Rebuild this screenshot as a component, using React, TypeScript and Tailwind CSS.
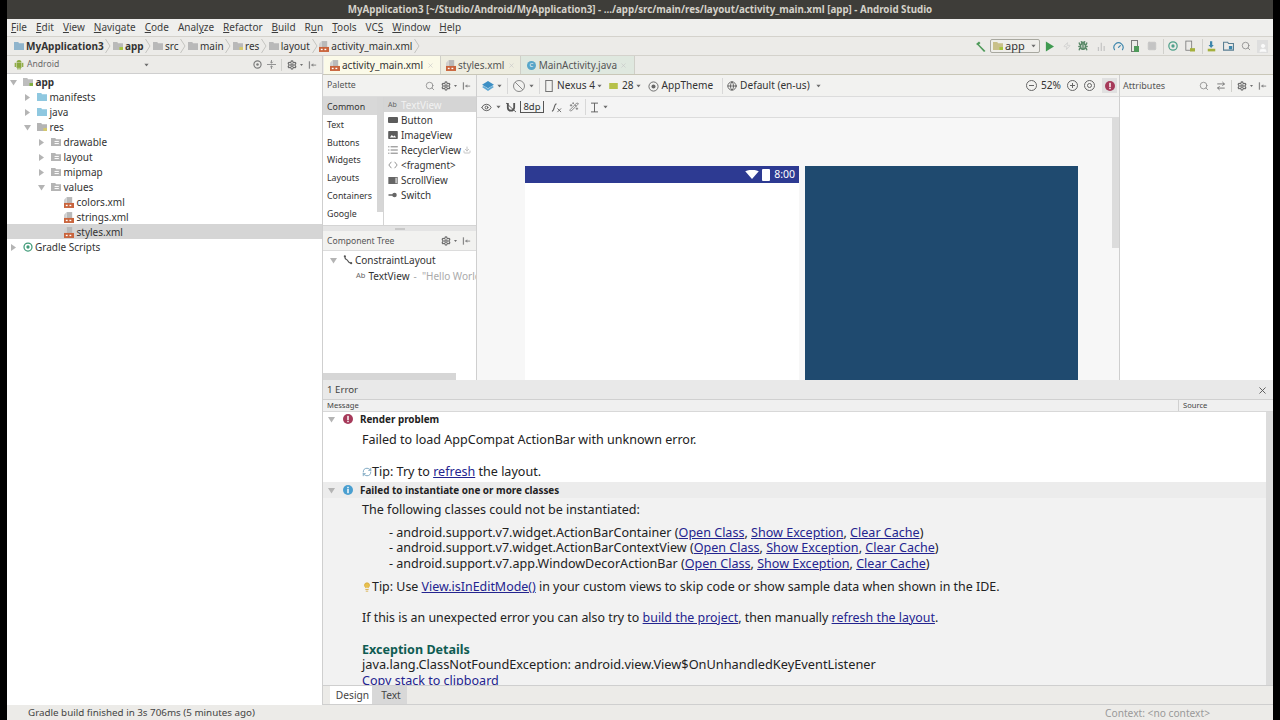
import { ReactNode } from "react";
import { Search, Settings, Zap, Bug, Gauge, Square, User, Eye, Wand2, Globe, X, ArrowRightLeft, Download, RefreshCw, Lightbulb } from "lucide-react";

const Caret = ({ className = "" }: { className?: string }) => (
  <svg width="7" height="4" viewBox="0 0 7 4" className={className}>
    <path d="M0.5 0h6L3.5 4z" fill="#6e6e6e" />
  </svg>
);

const Arrow = ({ open }: { open?: boolean }) => (
  <svg width="7" height="7" viewBox="0 0 7 7" className="shrink-0">
    {open ? <path d="M0 1h7L3.5 6.5z" fill="#b4b4b4" /> : <path d="M1 0v7l5-3.5z" fill="#b4b4b4" />}
  </svg>
);

const Chevron = () => (
  <svg width="6" height="16" viewBox="0 0 6 16" className="mx-[1.7px] shrink-0">
    <path d="M0.5 1l4.5 7-4.5 7" fill="none" stroke="#c4c4c0" />
  </svg>
);

const Folder = ({ color = "#b9b9b9", dot }: { color?: string; dot?: string }) => (
  <svg width="10" height="8" viewBox="0 0 14 11" className="shrink-0">
    <path d="M0 0h6l1 1.5h7V11H0z" fill={color} />
    {dot && <rect x="9" y="7" width="5" height="4" fill={dot} />}
  </svg>
);

const ResFolder = () => (
  <svg width="10" height="8" viewBox="0 0 14 11" className="shrink-0">
    <path d="M0 0h6l1 1.5h7V11H0z" fill="#b4b4b4" />
    <rect x="5" y="4" width="6" height="1.4" fill="#fff" />
    <rect x="5" y="7" width="6" height="1.4" fill="#fff" />
  </svg>
);

const XmlFile = () => (
  <svg width="10" height="11" viewBox="0 0 11 12" className="shrink-0">
    <path d="M3 0h6v7H3z" fill="#b9b9b9" />
    <path d="M3 0L0 3v4h3z" fill="#d0d0d0" />
    <rect x="0" y="6.5" width="11" height="5.5" fill="#c9643c" />
    <rect x="2" y="8.5" width="2" height="1.5" fill="#fff" />
    <rect x="6" y="8.5" width="2" height="1.5" fill="#fff" />
  </svg>
);

const AndroidIcon = () => (
  <svg width="10" height="11" viewBox="0 0 12 13">
    <path d="M3 4a3 3 0 0 1 6 0z" fill="#8aa83c" />
    <rect x="3" y="4.5" width="6" height="6" fill="#8aa83c" />
    <rect x="0.8" y="4.5" width="1.5" height="5" fill="#8aa83c" />
    <rect x="9.7" y="4.5" width="1.5" height="5" fill="#8aa83c" />
    <rect x="4" y="10" width="1.5" height="2.5" fill="#8aa83c" />
    <rect x="6.5" y="10" width="1.5" height="2.5" fill="#8aa83c" />
  </svg>
);

const HideIcon = () => (
  <svg width="9" height="10" viewBox="0 0 11 11">
    <rect x="1" y="1" width="1.5" height="9" fill="#8a8a8a" />
    <rect x="4" y="5" width="6" height="1.2" fill="#8a8a8a" />
    <path d="M4 5.5l2.5-2v4z" fill="#8a8a8a" />
  </svg>
);

const PanelTools = () => (
  <div className="flex items-center gap-[1px]">
    <Settings size={10} color="#6f6f6f" strokeWidth={3} />
    <Caret className="scale-50" />
    <div className="ml-[2px]">
      <HideIcon />
    </div>
  </div>
);

const ErrorBadge = ({ size = 10 }: { size?: number }) => (
  <svg width={size} height={size} viewBox="0 0 11 11" className="shrink-0">
    <circle cx="5.5" cy="5.5" r="5.5" fill="#a63a5a" />
    <rect x="4.7" y="2" width="1.6" height="4.6" fill="#fff" />
    <rect x="4.7" y="7.4" width="1.6" height="1.6" fill="#fff" />
  </svg>
);

const InfoBadge = () => (
  <svg width="10" height="10" viewBox="0 0 11 11" className="shrink-0">
    <circle cx="5.5" cy="5.5" r="5.5" fill="#4a9fd0" />
    <rect x="4.7" y="2" width="1.6" height="1.6" fill="#fff" />
    <rect x="4.7" y="4.4" width="1.6" height="4.6" fill="#fff" />
  </svg>
);

const GradleIcon = () => (
  <svg width="10" height="10" viewBox="0 0 12 12" className="shrink-0">
    <circle cx="6" cy="6" r="4.8" fill="none" stroke="#3f9a78" strokeWidth="1.5" />
    <circle cx="6" cy="6" r="2" fill="#3f9a78" />
  </svg>
);

const menus: [string, string, string][] = [
  ["", "F", "ile"],
  ["", "E", "dit"],
  ["", "V", "iew"],
  ["", "N", "avigate"],
  ["", "C", "ode"],
  ["Anal", "y", "ze"],
  ["", "R", "efactor"],
  ["", "B", "uild"],
  ["R", "u", "n"],
  ["", "T", "ools"],
  ["VC", "S", ""],
  ["", "W", "indow"],
  ["", "H", "elp"],
];

const MenuBar = () => (
  <div className="flex h-[17px] items-center gap-[9px] bg-[#efefed] pl-[4px] text-[10px] text-[#3c3c3c]">
    {menus.map(([a, b, c]) => (
      <span key={a + b + c}>
        {a}
        <span className="underline">{b}</span>
        {c}
      </span>
    ))}
  </div>
);

const Crumb = ({ icon, label, bold }: { icon: ReactNode; label: string; bold?: boolean }) => (
  <div className="flex items-center gap-[2px]">
    {icon}
    <span className={bold ? "font-bold" : ""}>{label}</span>
  </div>
);

const NavBar = () => (
  <div className="flex h-[20px] items-center border-y border-[#d4d2cc] bg-[#ecebe8] pl-[7px] text-[10px] text-[#333]">
    <div className="flex items-center">
      <Crumb icon={<Folder color="#8fb4cc" />} label="MyApplication3" bold />
      <Chevron />
      <Crumb icon={<Folder color="#b9b9b9" dot="#a4c639" />} label="app" bold />
      <Chevron />
      <Crumb icon={<Folder />} label="src" />
      <Chevron />
      <Crumb icon={<Folder />} label="main" />
      <Chevron />
      <Crumb icon={<Folder dot="#d6c96a" />} label="res" />
      <Chevron />
      <Crumb icon={<Folder />} label="layout" />
      <Chevron />
      <Crumb icon={<XmlFile />} label="activity_main.xml" />
      <Chevron />
    </div>
    <div className="ml-auto flex items-center pr-[5px]">
      <svg width="11" height="11" viewBox="0 0 11 11">
        <path d="M1 3l3-2.5 1.5 1.5-1.5 1.5L10.5 10 9 11 3 4.5z" fill="#4f9a5a" />
      </svg>
      <div className="ml-[4px] flex h-[14px] w-[50px] items-center gap-[2px] rounded-[2px] border border-[#a8a8a0] bg-[#efeeea] pl-[2px] text-[11px] text-[#333]">
        <Folder color="#c9c08a" dot="#a4c639" />
        <span>app</span>
        <Caret className="ml-auto mr-[2px] scale-75" />
      </div>
      <svg width="9" height="11" viewBox="0 0 10 11" className="ml-[5px]">
        <path d="M1 0l9 5.5L1 11z" fill="#3f9a50" />
      </svg>
      <Zap size={8} color="#c8c8c8" className="ml-[9px]" />
      <Bug size={10} color="#5c8a6a" strokeWidth={3.5} className="ml-[7px]" />
      <svg width="9" height="11" viewBox="0 0 11 11" className="ml-[9px]">
        <path d="M1 6h1.5v5H1zM4.5 1H6v10H4.5zM8 5h1.5v6H8z" fill="#c4c4c4" />
      </svg>
      <Gauge size={11} color="#3d86ac" strokeWidth={2.5} className="ml-[7px]" />
      <svg width="8" height="12" viewBox="0 0 8 12" className="ml-[7px]">
        <rect x="0.5" y="0.5" width="6" height="11" fill="none" stroke="#7a7a7a" />
        <rect x="3" y="6" width="5" height="6" fill="#4f9a5a" />
      </svg>
      <Square size={10} color="#c4c4c4" fill="#c4c4c4" className="ml-[8px]" />
      <div className="ml-[6px] h-[15px] w-px bg-[#d0d0cc]" />
      <svg width="10" height="12" viewBox="0 0 12 13" className="ml-[4px]">
        <circle cx="6" cy="6.5" r="5" fill="none" stroke="#4fa08a" strokeWidth="1.5" />
        <circle cx="6" cy="6.5" r="2" fill="#4fa08a" />
      </svg>
      <svg width="10" height="13" viewBox="0 0 12 14" className="ml-[7px]">
        <rect x="1" y="0.5" width="7" height="11" fill="none" stroke="#7a7a7a" />
        <rect x="6" y="9" width="6" height="4" fill="#a4b03c" />
      </svg>
      <div className="ml-[7px] h-[15px] w-px bg-[#d0d0cc]" />
      <svg width="9" height="13" viewBox="0 0 12 14" className="ml-[4px]">
        <path d="M4 0h3v5h2L5.5 9 2 5h2z" fill="#3d86ac" />
        <rect x="1" y="10" width="10" height="3.5" fill="#a4b03c" />
      </svg>
      <svg width="11" height="10" viewBox="0 0 13 12" className="ml-[7px]">
        <path d="M0.5 1.5h5l1 1.5h6v8h-12z" fill="none" stroke="#5a7f92" strokeWidth="1.4" />
        <rect x="7" y="6" width="4" height="4" fill="#3d86ac" />
      </svg>
      <Search size={10} color="#8a8a8a" strokeWidth={2} className="ml-[7px]" />
      <div className="ml-[6px] flex h-[13px] w-[11px] items-end justify-center bg-[#dedede]">
        <User size={10} color="#fafafa" fill="#fafafa" />
      </div>
    </div>
  </div>
);

const tree: { label: string; indent: number; kind: string; open?: boolean; bold?: boolean; leaf?: boolean; selected?: boolean }[] = [
  { label: "app", indent: 0, kind: "module", open: true, bold: true },
  { label: "manifests", indent: 1, kind: "blue" },
  { label: "java", indent: 1, kind: "blue" },
  { label: "res", indent: 1, kind: "res", open: true },
  { label: "drawable", indent: 2, kind: "sub" },
  { label: "layout", indent: 2, kind: "sub" },
  { label: "mipmap", indent: 2, kind: "sub" },
  { label: "values", indent: 2, kind: "sub", open: true },
  { label: "colors.xml", indent: 3, kind: "xml", leaf: true },
  { label: "strings.xml", indent: 3, kind: "xml", leaf: true },
  { label: "styles.xml", indent: 3, kind: "xml", leaf: true, selected: true },
];

const treeIcon = (kind: string) => {
  if (kind === "blue") return <Folder color="#8fc8e0" />;
  if (kind === "res") return <Folder color="#b4b4b4" dot="#d6c96a" />;
  if (kind === "module") return <Folder color="#bdbdbd" dot="#7fae3c" />;
  if (kind === "sub") return <ResFolder />;
  return <XmlFile />;
};

const indents = ["pl-[3px]", "pl-[17px]", "pl-[31px]", "pl-[44px]"];

const ProjectPanel = () => (
  <div className="flex w-[316px] shrink-0 flex-col border-r border-[#cfcfcf] bg-white text-[10px] text-[#333]">
    <div className="flex h-[18px] shrink-0 items-center border-b border-[#cfcfcf] bg-[#ecebe8] pl-[7px] pr-[5px] text-[8.6px] text-[#6a6a6a]">
      <AndroidIcon />
      <span className="ml-[3px]">Android</span>
      <Caret className="ml-[84px] scale-75" />
      <div className="ml-auto flex items-center">
        <svg width="9" height="9" viewBox="0 0 10 10">
          <circle cx="5" cy="5" r="4" fill="none" stroke="#7d7d7d" strokeWidth="1.3" />
          <circle cx="5" cy="5" r="1.4" fill="#7d7d7d" />
        </svg>
        <svg width="9" height="9" viewBox="0 0 10 10" className="ml-[5px]">
          <path d="M0 5h10M5 0v3.5M5 6.5V10M3.5 2L5 3.5 6.5 2M3.5 8L5 6.5 6.5 8" fill="none" stroke="#8a8a8a" />
        </svg>
        <div className="mx-[5px] h-[12px] w-px bg-[#d0d0cc]" />
        <PanelTools />
      </div>
    </div>
    <div>
      {tree.map((r) => (
        <div key={r.label} className={`flex h-[15px] items-center gap-[6px] pt-[1px] ${indents[r.indent]} ${r.selected ? "bg-[#d5d5d5]" : ""}`}>
          {r.leaf ? <span className="w-[7px]" /> : <Arrow open={r.open} />}
          <div className="flex items-center gap-[2.5px]">
            {treeIcon(r.kind)}
            <span className={r.bold ? "font-bold" : ""}>{r.label}</span>
          </div>
        </div>
      ))}
      <div className="flex h-[15px] items-center gap-[6px] pl-[3px] pt-[1px]">
        <Arrow />
        <div className="flex items-center gap-[2px]">
          <GradleIcon />
          <span>Gradle Scripts</span>
        </div>
      </div>
    </div>
  </div>
);

const TabX = () => <X size={7} color="#c4c4c4" className="ml-auto shrink-0" />;

const TabStrip = () => (
  <div className="flex h-[19px] shrink-0 items-stretch border-b border-[#c9c7b8] bg-[#ecebe8] pl-[1px] text-[10px] text-[#333]">
    <div className="flex w-[116px] items-center gap-[2px] bg-[#fbfae8] pl-[6px] pr-[6px]">
      <XmlFile />
      <span>activity_main.xml</span>
      <TabX />
    </div>
    <div className="flex w-[80px] items-center gap-[2px] border-l border-[#cfcfc8] bg-[#eeede0] pl-[5px] pr-[5px]">
      <XmlFile />
      <span className="text-[#555]">styles.xml</span>
      <TabX />
    </div>
    <div className="flex w-[115px] items-center gap-[3px] border-x border-[#cfcfc8] bg-[#dfe8df] pl-[6px] pr-[7px]">
      <span className="flex h-[9px] w-[9px] items-center justify-center rounded-full bg-[#58a6c8] text-[6px] text-white">C</span>
      <span className="text-[#555]">MainActivity.java</span>
      <TabX />
    </div>
  </div>
);

const categories = ["Common", "Text", "Buttons", "Widgets", "Layouts", "Containers", "Google"];

const ItemGlyph = ({ type }: { type: string }) => {
  if (type === "list")
    return (
      <svg width="10" height="8" viewBox="0 0 12 10">
        <path d="M0 1h1.5M3 1h9M0 5h1.5M3 5h9M0 9h1.5M3 9h9" stroke="#5c5c5c" />
      </svg>
    );
  if (type === "code")
    return (
      <svg width="10" height="8" viewBox="0 0 12 10">
        <path d="M4 1L0.8 5 4 9M8 1l3.2 4L8 9" fill="none" stroke="#7a7a7a" />
      </svg>
    );
  if (type === "switch")
    return (
      <svg width="10" height="6" viewBox="0 0 12 8">
        <rect x="0" y="3" width="6" height="2" fill="#666" />
        <circle cx="8" cy="4" r="3" fill="#666" />
      </svg>
    );
  if (type === "image")
    return (
      <svg width="10" height="8" viewBox="0 0 12 10">
        <rect width="12" height="10" rx="1" fill="#5c5c5c" />
        <path d="M2 8l2.5-3 2 2 1.5-1.5L10 8z" fill="#fff" />
      </svg>
    );
  if (type === "scroll")
    return (
      <svg width="10" height="7" viewBox="0 0 12 9">
        <rect width="12" height="9" fill="#666" />
        <rect x="9" y="1" width="2" height="7" fill="#ccc" />
      </svg>
    );
  return <span className="h-[6px] w-[10px] rounded-[1px] bg-[#5c5c5c]" />;
};

const paletteItems = [
  { type: "button", label: "Button" },
  { type: "image", label: "ImageView" },
  { type: "list", label: "RecyclerView", download: true },
  { type: "code", label: "<fragment>" },
  { type: "scroll", label: "ScrollView" },
  { type: "switch", label: "Switch" },
];

const Palette = () => (
  <div className="flex w-[154px] shrink-0 flex-col border-r border-[#cfcfcf] bg-white text-[8.8px] text-[#333]">
    <div className="flex h-[22px] shrink-0 items-center border-b border-[#dcdcdc] bg-[#f2f2f0] pl-[4px] pr-[5px] pt-[1px] text-[#555]">
      <span>Palette</span>
      <div className="ml-auto flex items-center gap-[6px]">
        <Search size={10} color="#8a8a8a" strokeWidth={2} />
        <PanelTools />
      </div>
    </div>
    <div className="flex h-[129px] shrink-0 border-b border-[#d4d4d4]">
      <div className="flex w-[61px] shrink-0 border-r border-[#d4d4d4]">
        <div className="w-[54px]">
          {categories.map((c) => (
            <div key={c} className={`flex h-[17.8px] items-center pl-[4px] pt-[3.5px] ${c === "Common" ? "bg-[#d8d8d8]" : ""}`}>
              {c}
            </div>
          ))}
        </div>
        <div className="h-[115px] w-[6px] bg-[#d6d6d6]" />
      </div>
      <div className="flex-1 text-[9.9px]">
        <div className="flex h-[15px] items-center gap-[1px] bg-[#d5d5d5] pl-[4px] pt-[1px]">
          <span className="w-[12px] text-[7px] text-[#666]">Ab</span>
          <span className="text-[#f2f2f2]">TextView</span>
        </div>
        {paletteItems.map((i) => (
          <div key={i.label} className="flex h-[15px] items-center gap-[1px] pl-[4px] pt-[1px]">
            <span className="flex w-[12px]">
              <ItemGlyph type={i.type} />
            </span>
            <span>{i.label}</span>
            {i.download && <Download size={8} color="#c4c4c4" strokeWidth={3} className="ml-[1px]" />}
          </div>
        ))}
      </div>
    </div>
    <div className="flex h-[5px] shrink-0 items-center justify-center bg-[#e4e4e4]">
      <span className="h-[2px] w-[10px] bg-[#c8c8c8]" />
    </div>
    <div className="flex h-[20px] shrink-0 items-center justify-between border-b border-[#dcdcdc] bg-[#f2f2f0] pl-[4px] pr-[5px] pt-[1px] text-[8.6px] text-[#555]">
      <span>Component Tree</span>
      <PanelTools />
    </div>
    <div className="flex-1 overflow-hidden text-[10px]">
      <div className="flex h-[17px] items-center gap-[6px] pl-[7px] pt-[1px]">
        <Arrow open />
        <svg width="10" height="10" viewBox="0 0 11 11">
          <path d="M2 1c0 5 2 3 3 5s2 3 4 3" fill="none" stroke="#555" strokeWidth="1.3" />
          <circle cx="2" cy="1.5" r="1.2" fill="#555" />
          <circle cx="9" cy="9" r="1.2" fill="#555" />
        </svg>
        <span className="-ml-[4px]">ConstraintLayout</span>
      </div>
      <div className="flex h-[15px] items-center overflow-hidden whitespace-nowrap pl-[33px] pt-[1px]">
        <span className="w-[13px] text-[7.5px] text-[#666]">Ab</span>
        <span className="ml-[3px]">TextView</span>
        <span className="ml-[4px] text-[#aaa]">-&nbsp;&nbsp;"Hello World!"</span>
      </div>
    </div>
    <div className="h-[7px] w-[133px] shrink-0 bg-[#d6d6d6]" />
  </div>
);

const Sep = ({ className = "" }: { className?: string }) => <div className={`h-[16px] w-px bg-[#d8d8d8] ${className}`} />;

const Canvas = () => (
  <div className="flex min-w-0 flex-1 flex-col bg-[#f7f7f7]">
    <div className="flex h-[22px] shrink-0 items-center border-b border-[#dcdcdc] bg-[#f2f2f0] pl-[5px] pt-[1px] text-[10.1px] text-[#333]">
      <svg width="12" height="11" viewBox="0 0 13 12">
        <path d="M6.5 0L13 4 6.5 8 0 4z" fill="#3d8fc4" />
        <path d="M0 6.5l2-1 4.5 3 4.5-3 2 1L6.5 11z" fill="#5fa8d4" />
      </svg>
      <Caret className="ml-[2px] scale-75" />
      <Sep className="ml-[4px]" />
      <svg width="14" height="14" viewBox="0 0 14 14" className="ml-[4px]">
        <circle cx="7" cy="7" r="5.5" fill="none" stroke="#8a8a8a" />
        <path d="M3 3l8 8" stroke="#8a8a8a" />
      </svg>
      <Caret className="ml-[2px] scale-75" />
      <Sep className="ml-[4px]" />
      <svg width="8" height="12" viewBox="0 0 8 13" className="ml-[5px]">
        <rect x="0.5" y="0.5" width="7" height="12" fill="none" stroke="#6a6a6a" />
      </svg>
      <span className="ml-[4px]">Nexus 4</span>
      <Caret className="ml-[1px] scale-75" />
      <svg width="9" height="6" viewBox="0 0 10 7" className="ml-[6px]">
        <rect width="10" height="7" fill="#b6c14a" />
      </svg>
      <span className="ml-[4px]">28</span>
      <Caret className="ml-[1px] scale-75" />
      <svg width="11" height="11" viewBox="0 0 12 12" className="ml-[6px]">
        <circle cx="6" cy="6" r="5" fill="none" stroke="#666" />
        <circle cx="6" cy="6" r="2.2" fill="#666" />
      </svg>
      <span className="ml-[3px]">AppTheme</span>
      <Sep className="ml-[9px]" />
      <Globe size={10} color="#555" className="ml-[4px]" />
      <span className="ml-[3px]">Default (en-us)</span>
      <Caret className="ml-[5px] scale-75" />
      <div className="ml-auto flex items-center pr-[2px]">
        <svg width="11" height="11" viewBox="0 0 11 11">
          <circle cx="5.5" cy="5.5" r="5" fill="none" stroke="#666" />
          <path d="M3 5.5h5" stroke="#666" />
        </svg>
        <span className="ml-[4px]">52%</span>
        <svg width="11" height="11" viewBox="0 0 11 11" className="ml-[6px]">
          <circle cx="5.5" cy="5.5" r="5" fill="none" stroke="#666" />
          <path d="M3 5.5h5M5.5 3v5" stroke="#666" />
        </svg>
        <svg width="11" height="11" viewBox="0 0 11 11" className="ml-[6px]">
          <circle cx="5.5" cy="5.5" r="5" fill="none" stroke="#666" />
          <circle cx="5.5" cy="5.5" r="2" fill="none" stroke="#666" />
        </svg>
        <div className="ml-[7px] flex h-[15px] w-[15px] items-center justify-center bg-[#e0e0e0]">
          <ErrorBadge size={10} />
        </div>
      </div>
    </div>
    <div className="flex h-[21px] shrink-0 items-center border-b border-[#dcdcdc] bg-[#f4f4f4] pl-[4px] text-[9.5px] text-[#333]">
      <Eye size={11} color="#555" />
      <Caret className="ml-[3px] scale-75" />
      <svg width="10" height="11" viewBox="0 0 11 12" className="ml-[4px]">
        <path d="M2 1v5a3.5 3.5 0 0 0 7 0V1" fill="none" stroke="#555" strokeWidth="2" />
        <path d="M0 1l11 10" stroke="#555" />
      </svg>
      <span className="ml-[4px] w-[24px] border-x border-b border-[#555] text-center leading-[11px]">8dp</span>
      <svg width="11" height="11" viewBox="0 0 12 12" className="ml-[7px]">
        <path d="M1 10c3 0 2-8 5-8" fill="none" stroke="#666" strokeWidth="1.2" />
        <path d="M7 7l4 4M11 7l-4 4" stroke="#666" />
      </svg>
      <Wand2 size={10} color="#777" className="ml-[7px]" />
      <Sep className="ml-[6px]" />
      <svg width="7" height="11" viewBox="0 0 8 12" className="ml-[5px]">
        <path d="M0 1h8M4 1v10M0 11h8" stroke="#555" />
      </svg>
      <Caret className="ml-[4px] scale-75" />
    </div>
    <div className="flex flex-1 overflow-hidden">
      <div className="flex flex-1 items-start gap-[6px] overflow-hidden pl-[48px] pt-[48px]">
        <div className="h-[300px] w-[274px] shrink-0 bg-white">
          <div className="flex h-[17px] items-center justify-end gap-[3px] bg-[#2d3a92] pr-[4px]">
            <svg width="14" height="9" viewBox="0 0 15 10">
              <path d="M0 1.5Q7.5-2 15 1.5L7.5 10z" fill="#fff" />
            </svg>
            <span className="h-[12px] w-[8px] rounded-[1px] bg-white" />
            <span className="ml-[1px] text-[10.5px] text-white">8:00</span>
          </div>
        </div>
        <div className="h-[300px] w-[273px] shrink-0 bg-[#1f4a6f]" />
      </div>
      <div className="w-[7px] shrink-0 self-start">
        <div className="h-[130px] bg-[#dcdcdc]" />
      </div>
    </div>
  </div>
);

const Attributes = () => (
  <div className="flex w-[154px] shrink-0 flex-col border-l border-[#cfcfcf] bg-white">
    <div className="flex h-[22px] shrink-0 items-center border-b border-[#dcdcdc] bg-[#f2f2f0] pl-[3px] pr-[6px] pt-[1px] text-[9px] text-[#555]">
      <span>Attributes</span>
      <div className="ml-auto flex items-center gap-[5px]">
        <Search size={10} color="#8a8a8a" strokeWidth={2} />
        <ArrowRightLeft size={10} color="#666" className="ml-[2px]" />
        <div className="h-[12px] w-px bg-[#d0d0cc]" />
        <PanelTools />
      </div>
    </div>
  </div>
);

const A = ({ children }: { children: ReactNode }) => <span className="text-[#24248f] underline">{children}</span>;

const Line = ({ children, className = "" }: { children: ReactNode; className?: string }) => (
  <div className={`h-[15.7px] whitespace-nowrap leading-[15.7px] ${className}`}>{children}</div>
);

const missing = ["android.support.v7.widget.ActionBarContainer", "android.support.v7.widget.ActionBarContextView", "android.support.v7.app.WindowDecorActionBar"];

const ErrorPanel = () => (
  <div className="flex h-[305px] shrink-0 flex-col bg-[#f2f2f2] text-[#222]">
    <div className="flex h-[20px] shrink-0 items-center justify-between border-b border-[#d0d0d0] bg-[#e9e9e9] pl-[4px] pr-[5px] pt-[1px] text-[9.7px] text-[#444]">
      <span>1 Error</span>
      <X size={11} color="#555" />
    </div>
    <div className="flex h-[12px] shrink-0 items-center border-b border-[#d8d8d8] bg-[#f0f0f0] pl-[4px] text-[7.6px] text-[#444]">
      <span className="w-[851px]">Message</span>
      <span className="flex h-full items-center border-l border-[#d0d0d0] pl-[4px]">Source</span>
    </div>
    <div className="flex min-h-0 flex-1">
      <div className="min-w-0 flex-1 overflow-hidden text-[12.55px]">
        <div className="h-[70px] bg-white">
          <div className="flex h-[16px] items-center pb-[2px] pl-[5px] text-[9.9px] font-bold">
            <Arrow open />
            <span className="ml-[8px]">
              <ErrorBadge />
            </span>
            <span className="ml-[7px]">Render problem</span>
          </div>
          <div className="pl-[39px] pt-[4px]">
            <Line>Failed to load AppCompat ActionBar with unknown error.</Line>
            <Line className="mt-[16px] flex items-center">
              <RefreshCw size={10} color="#6a9ab8" />
              <span>
                Tip: Try to <A>refresh</A> the layout.
              </span>
            </Line>
          </div>
        </div>
        <div className="flex h-[16px] items-center bg-[#ececec] pl-[5px] text-[9.9px] font-bold">
          <Arrow open />
          <span className="ml-[8px]">
            <InfoBadge />
          </span>
          <span className="ml-[7px]">Failed to instantiate one or more classes</span>
        </div>
        <div className="pl-[39px] pt-[4px]">
          <Line>The following classes could not be instantiated:</Line>
          <div className="mt-[7px] pl-[27px]">
            {missing.map((m) => (
              <Line key={m}>
                - {m} (<A>Open Class</A>, <A>Show Exception</A>, <A>Clear Cache</A>)
              </Line>
            ))}
          </div>
          <Line className="mt-[7px] flex items-center text-[12.43px]">
            <Lightbulb size={10} color="#d8a93c" fill="#e8c14c" />
            <span>
              Tip: Use <A>View.isInEditMode()</A> in your custom views to skip code or show sample data when shown in the IDE.
            </span>
          </Line>
          <Line className="mt-[15.6px] text-[12.42px]">
            If this is an unexpected error you can also try to <A>build the project</A>, then manually <A>refresh the layout</A>.
          </Line>
          <Line className="mt-[16px] font-bold text-[#0f5c52]">Exception Details</Line>
          <Line className="text-[12.77px]">java.lang.ClassNotFoundException: android.view.View$OnUnhandledKeyEventListener</Line>
          <Line>
            <A>Copy stack to clipboard</A>
          </Line>
        </div>
      </div>
      <div className="w-[7px] shrink-0 bg-[#dcdcdc]" />
    </div>
  </div>
);

const DesignTabs = () => (
  <div className="flex h-[20px] shrink-0 items-stretch border-y border-[#cfcfcf] bg-[#ecebe8] pl-[7px] text-[10.2px] text-[#444]">
    <span className="flex w-[42px] items-center justify-center bg-white pl-[3px] pt-[1px]">Design</span>
    <span className="flex w-[35px] items-center justify-center bg-[#d8d8d8] pl-[3px] pt-[1px]">Text</span>
  </div>
);

export default function App() {
  return (
    <div className="flex h-[720px] w-[1280px] justify-center overflow-hidden bg-black font-['Noto_Sans','Open_Sans',sans-serif]">
      <div className="flex w-[1266px] flex-col">
        <div className="flex h-[19px] shrink-0 items-center justify-center bg-[#3e3d39] pt-[1px] text-[9.75px] font-bold text-[#d5d2ca]">
          MyApplication3 [~/Studio/Android/MyApplication3] - .../app/src/main/res/layout/activity_main.xml [app] - Android Studio
        </div>
        <MenuBar />
        <NavBar />
        <div className="flex min-h-0 flex-1">
          <ProjectPanel />
          <div className="flex min-w-0 flex-1 flex-col">
            <TabStrip />
            <div className="flex min-h-0 flex-1">
              <Palette />
              <Canvas />
              <Attributes />
            </div>
            <ErrorPanel />
            <DesignTabs />
          </div>
        </div>
        <div className="flex h-[15px] shrink-0 items-center justify-between bg-[#ecebe8] pl-[21px] pr-[63px] pt-[2px] text-[9.8px] text-[#444]">
          <span>Gradle build finished in 3s 706ms (5 minutes ago)</span>
          <span className="text-[10.2px] text-[#999]">Context: &lt;no context&gt;</span>
        </div>
      </div>
    </div>
  );
}
